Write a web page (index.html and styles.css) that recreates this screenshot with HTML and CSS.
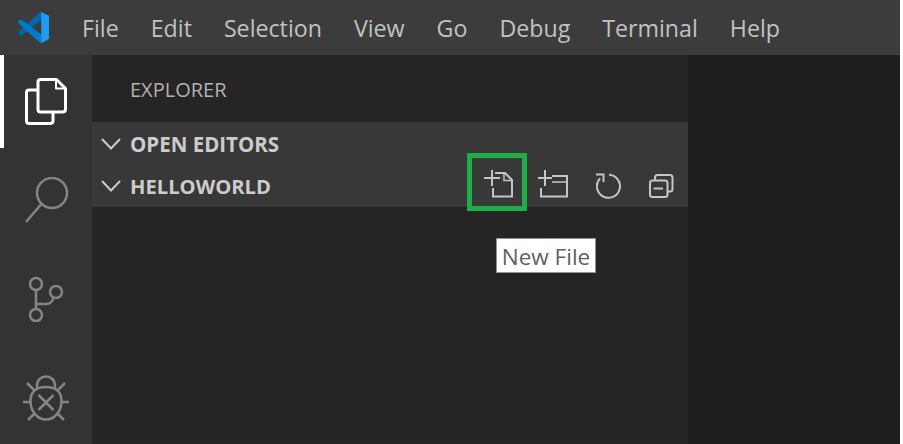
FILE: index.html
```html
<!DOCTYPE html>
<html lang="en">
<head>
<meta charset="utf-8">
<title>Explorer</title>
<link rel="stylesheet" href="styles.css">
</head>
<body>
<div class="app">
  <header class="titlebar">
    <svg class="logo" width="31" height="31" viewBox="0 0 100 100">
      <path fill="#0065a9" d="M96.46 10.8L75.86.88C73.47-.27 70.62.21 68.75 2.08L1.3 63.58c-1.81 1.65-1.81 4.51 0 6.16l5.51 5.01c1.49 1.35 3.72 1.45 5.32.24L93.36 13.37C96.09 11.3 100 13.25 100 16.67v-.24c0-2.4-1.38-4.59-3.54-5.63z"/>
      <path fill="#007acc" d="M96.46 89.2l-20.6 9.92c-2.39 1.15-5.24.67-7.11-1.2L1.3 36.42c-1.81-1.65-1.81-4.51 0-6.16l5.51-5.01c1.49-1.35 3.72-1.45 5.32-.24l81.23 61.62c2.73 2.07 6.64.12 6.64-3.3v.24c0 2.4-1.38 4.59-3.54 5.63z"/>
      <path fill="#1f9cf0" d="M75.86 99.13c-2.39 1.15-5.24.66-7.11-1.21 2.31 2.31 6.25.67 6.25-2.59V4.67c0-3.26-3.94-4.89-6.25-2.59C70.62.21 73.47-.27 75.86.87l20.6 9.91c2.16 1.04 3.54 3.23 3.54 5.63v67.18c0 2.4-1.38 4.59-3.54 5.63z"/>
    </svg>
    <nav class="menu">
      <span>File</span><span>Edit</span><span>Selection</span><span>View</span><span>Go</span><span>Debug</span><span>Terminal</span><span>Help</span>
    </nav>
  </header>
  <div class="workbench">
    <aside class="activity">
      <div class="act act-active">
        <svg width="42" height="47" viewBox="0 0 42 47" fill="none" stroke="#fff" stroke-width="3" stroke-linejoin="round">
          <path d="M15 1.500 H31.500 L40.500 10.500 V31 Q40.500 34 37.500 34 H15.500 Q13 34 13 31.500 V4 Q13 1.500 15.500 1.500 Z"/>
          <path d="M31 2 V10.500 H40" stroke-width="2"/>
          <path d="M13 12 H4 Q1.500 12 1.500 14.500 V43 Q1.500 45.500 4 45.500 H25 Q28 45.500 28 43 V34"/>
        </svg>
      </div>
      <div class="act">
        <svg width="46" height="46" viewBox="0 0 46 46" fill="none" stroke="#858585" stroke-width="2.500">
          <circle cx="29" cy="16" r="15"/>
          <path d="M18 27.500 L3 45"/>
        </svg>
      </div>
      <div class="act">
        <svg width="36" height="46" viewBox="0 0 36 46" fill="none" stroke="#858585" stroke-width="2.500">
          <circle cx="8" cy="8" r="6"/>
          <circle cx="8" cy="39" r="6"/>
          <circle cx="28" cy="16" r="6"/>
          <path d="M8 14 V33"/>
          <path d="M8 28 H18 Q24 28 25.500 21.500"/>
        </svg>
      </div>
      <div class="act">
        <svg width="48" height="46" viewBox="0 0 48 46" fill="none" stroke="#858585" stroke-width="2.500">
          <path d="M24 12 C34 12 39.500 17 39.500 26 C39.500 37 32 44.500 24 44.500 C16 44.500 8.500 37 8.500 26 C8.500 17 14 12 24 12 Z"/>
          <path d="M15 13.500 V11 C15 5 19 1.500 24 1.500 C29 1.500 33 5 33 11 V13.500"/>
          <path d="M16.500 20 L31.500 35 M31.500 20 L16.500 35"/>
          <path d="M5 8 L12 15 M43 8 L36 15 M1 27 H8 M47 27 H40 M6 45 L13 38 M42 45 L35 38"/>
        </svg>
      </div>
    </aside>
    <section class="sidebar">
      <div class="side-title">EXPLORER</div>
      <div class="sections">
        <div class="section-row">
          <svg class="chev" width="20" height="12" viewBox="0 0 20 12" fill="none" stroke="#ccc" stroke-width="2"><path d="M1 1 L10 10.500 L19 1"/></svg>
          <span class="section-name">OPEN EDITORS</span>
        </div>
        <div class="section-row">
          <svg class="chev" width="20" height="12" viewBox="0 0 20 12" fill="none" stroke="#ccc" stroke-width="2"><path d="M1 1 L10 10.500 L19 1"/></svg>
          <span class="section-name name-tight">HELLOWORLD</span>
          <div class="actions">
            <div class="action action-hl">
              <svg width="32" height="32" viewBox="0 0 32 32" fill="none" stroke="#c5c5c5" stroke-width="2">
                <path d="M1 8 H17 M9 0 V16"/>
                <path d="M12 3 H22 L29 10 V26.500 H10 V18"/>
                <path d="M21 3 V10.500 H29" stroke-width="1.500"/>
              </svg>
              <div class="tooltip">New File</div>
            </div>
            <div class="action">
              <svg width="32" height="32" viewBox="0 0 32 32" fill="none" stroke="#c5c5c5" stroke-width="2">
                <path d="M1 8 H15 M8 0 V16"/>
                <path d="M15 6 H30 V26.500 H4 V18"/>
                <path d="M15 12 H30" stroke-width="1.500"/>
              </svg>
            </div>
            <div class="action">
              <svg width="32" height="32" viewBox="0 0 32 32" fill="none" stroke="#c5c5c5" stroke-width="2">
                <path d="M9 8.500 A11.500 11.500 0 1 0 18 4.800"/>
                <path d="M5 4.500 H12.500 V12"/>
              </svg>
            </div>
            <div class="action">
              <svg width="26" height="24" viewBox="0 0 26 24" fill="none" stroke="#c5c5c5" stroke-width="2">
                <path d="M7 6.500 V3.500 Q7 1 9.500 1 H22 Q24.500 1 24.500 3.500 V15 Q24.500 17.500 22 17.500 H19.500"/>
                <rect x="2" y="6.500" width="17.500" height="16.500" rx="2.500"/>
                <path d="M5.500 14.500 H15"/>
              </svg>
            </div>
          </div>
        </div>
      </div>
    </section>
    <main class="editor"></main>
  </div>
</div>
</body>
</html>
```
FILE: styles.css
```css
*, *::before { box-sizing: border-box; }
html, body { margin: 0; height: 100%; background: #fff; overflow: hidden; }
.app { width: 900px; height: 444px; display: flex; flex-direction: column; font-family: "Open Sans", "Liberation Sans", sans-serif; }
.titlebar { height: 55px; background: #3c3c3c; display: flex; align-items: center; flex: none; padding-left: 18px; }
.logo { flex: none; }
.menu { display: flex; gap: 32px; margin-left: 33px; font-size: 23.200px; color: #c2c2c2; }
.workbench { flex: 1; display: flex; min-height: 0; }
.activity { width: 92px; flex: none; background: #333; display: flex; flex-direction: column; gap: 6px; }
.act { height: 93px; display: flex; align-items: center; justify-content: center; }
.act-active { border-left: 4px solid #fff; padding-right: 4px; }
.sidebar { width: 596px; flex: none; background: #252526; display: flex; flex-direction: column; }
.side-title { height: 67px; padding: 2px 0 0 38px; display: flex; align-items: center; font-size: 20px; color: #b2b2b2; }
.sections { background: #383838; padding-top: 1px; }
.section-row { height: 42px; display: flex; align-items: center; padding-left: 9px; color: #ccc; }
.chev { flex: none; }
.section-name { margin-left: 9px; font-size: 20.500px; font-weight: 700; }
.name-tight { font-size: 20.200px; }
.actions { display: flex; margin-left: auto; }
.action { width: 54px; height: 42px; display: flex; align-items: center; justify-content: center; position: relative; }
.action-hl::before { content: ""; position: absolute; left: -5px; top: -12px; width: 60px; height: 58px; border: 5px solid #1fad4a; }
.tooltip { position: absolute; left: 24px; top: 73px; width: 100px; height: 35px; padding-top: 2px; background: #fff; border: 1px solid #919191; color: #616161; font-size: 22.500px; display: flex; align-items: center; justify-content: center; white-space: nowrap; }
.editor { flex: 1; background: #1e1e1e; }
```
